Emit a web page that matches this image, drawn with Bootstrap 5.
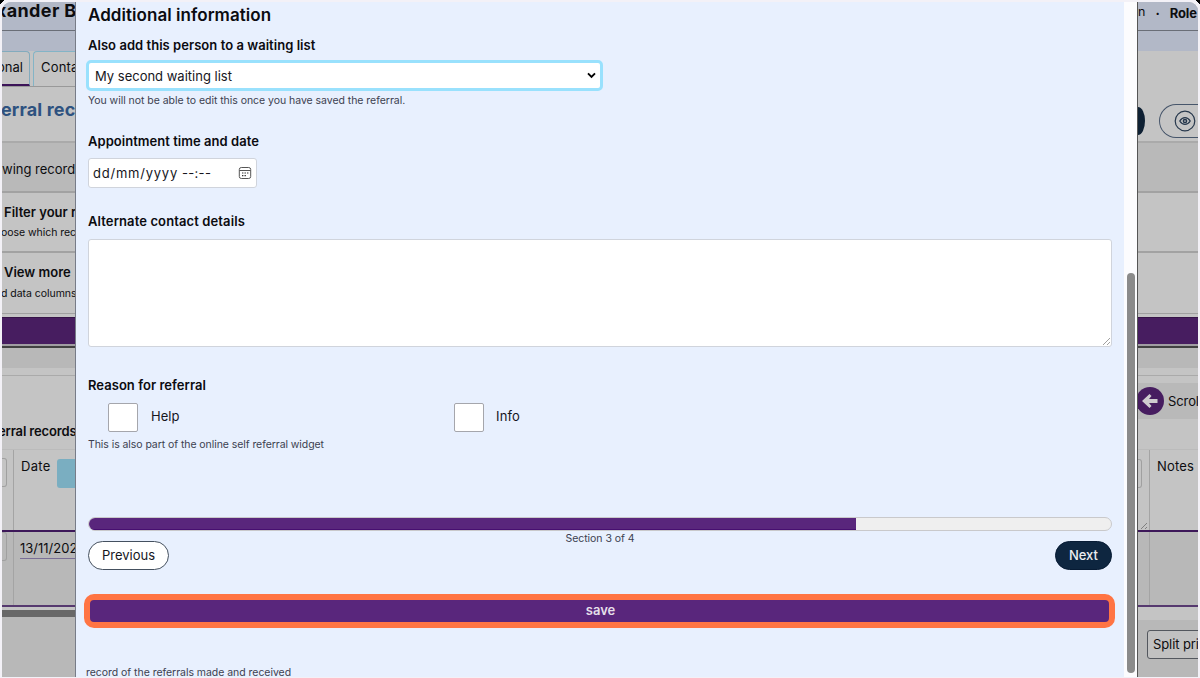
<!DOCTYPE html>
<html lang="en">
<head>
<meta charset="utf-8">
<meta name="viewport" content="width=device-width, initial-scale=1">
<title>Referral records</title>
<link rel="stylesheet" href="https://cdn.jsdelivr.net/npm/bootstrap@5.3.0/dist/css/bootstrap.min.css">
<style>
html,body{height:100%}
body{font-family:Inter,"Liberation Sans",sans-serif;font-size:13px;color:#16161d;background:#f3f1f7;overflow:hidden;line-height:20px}
.stage{height:678px;padding:2px 2px 1px;background:linear-gradient(135deg,#000 3px,transparent 3px),linear-gradient(225deg,#000 3px,transparent 3px),#f3f1f7}
.frame{height:675px;border-radius:9px 9px 0 0;overflow:hidden}
.t{display:inline-block;white-space:nowrap}
/* dimmed page on both sides of the dialog */
.side{background:#c4c4c4;overflow:hidden;white-space:nowrap}
.side-l{width:73px}.side-r{width:60px}
.side .t{color:#0d0d10}
.top{height:29px;background:#b2b8c7;border-bottom:1px solid #6a6e77}
.sub{height:20px;background:#b2b8c7}
.tabs{height:36px;border-bottom:1px solid #999}
.tab1{width:28px;flex:none;border:1px solid #83abbd;border-left:0;border-bottom:2px solid #3c1458;border-radius:0 4px 0 0;margin-right:3px}
.tab2{width:60px;flex:none;border:1px solid #83b4c6;border-right:0;border-bottom:0;border-radius:4px 0 0;padding-left:7px}
.head-row{height:54px}
.page-title{font-size:18px;line-height:46px;margin-left:-1px}
.side .page-title{color:#2e5280}
.viewing{height:52px;background:#b9b9b9;border-top:2px solid #aaa;border-bottom:2px solid #a2a2a2}
.panel1{height:60px;border-bottom:2px solid #a2a2a2}
.panel2{height:61px;border-bottom:1px solid #a0a0a0}
.side .panel-title{margin-left:2px;line-height:38px;font-weight:600}
.side .hint{margin-top:-6px}
.purple{height:29px;margin-top:3px;background:#471d60;border-top:1px solid #361448;border-bottom:2px solid #a09da2}
.shade{height:22px;background:#b8b8b8;border-top:2px solid #414141;margin-bottom:7px}
.gap1{height:74px;border-top:1px solid #aaa}
.thead0{height:83px;border-top:1px solid #bbb;border-bottom:2px solid #3d1859}
.trow0{height:75px;background:#b8b8b8;border-bottom:2px solid #56396f}
.c1{width:12px;border-right:1px solid #a4a4a4;flex:none}
.stub{width:5px;height:29px;border:1px solid #a0a0a0;border-left:0;border-radius:0 3px 3px 0}
.chip{width:40px;height:29px;background:#7aaec1;border-radius:3px;flex:none}
.date-link{border-bottom:1px solid #7a6e96;height:21px}
.hbar{height:7px;background:#686868;margin-top:3px}
.foot{height:60px;background:#b8b8b8}
.dark-cap{width:7px;height:28px;flex:none;background:#0e2033;border-radius:0 7px 7px 0/0 14px 14px 0}
.view-pill{width:60px;height:34px;flex:none;border:1px solid #47566b;border-right:0;border-radius:17px 0 0 17px;padding-left:14px}
.scroll-row{height:36px;background:#b9b9b9;margin-top:7px}
.split{height:29px;width:70px;border:1px solid #53575e;border-radius:3px;margin-left:9px;padding-left:5px;background:#c1c1c1}
/* dialog */
.sheet{width:1063px;background:#e8f0fe;border-left:1px solid #777c88;border-right:1px solid #555;flex:none}
.form-area{width:1048px;padding:0 12px}
.track{width:13px;background:#fcfcfe;padding:271px 2px 0 3px}
.thumb{height:400px;background:#8b8b8b;border-radius:4px}
.sheet-title{height:33px;padding-top:3px;font-size:17px;font-weight:600;letter-spacing:.05px;color:#0b0b10}
.lbl{font-weight:600;height:20px;color:#0b0b10;letter-spacing:.04px}
.hint{font-size:10.5px;height:16px;line-height:16px;color:#3c3f50;letter-spacing:-.04px}
.sel{width:517px;height:31px;border:3px solid #99e1fd;border-radius:5px;background:#fff;margin:5px 0 2px -2px;padding:0 4px 0 6px}
.field{border:1px solid #d0d4dc;border-radius:3px;background:#fff}
.date{width:169px;height:30px;padding:0 4px;margin-top:7px}
.area{height:108px;margin-top:8px;padding:0 1px 1px 0}
.checks{height:30px;margin:8px 0 4px 20px}
.box{width:30px;height:29px;background:#fff;border:1px solid #a5a6ac;border-radius:2px}
.check-cell{width:346px}
.bar{height:14px;border:1px solid #c9c9cb;border-radius:7px;background:#efefef;overflow:hidden;margin-top:64px}
.fill{height:12px;background:#59267c;border-bottom:1px solid #470f70}
.nav3{display:grid;grid-template-columns:1fr auto 1fr;height:39px}
.pill{display:block;height:29px;border-radius:15px;border:1px solid #44505f;background:#fff;line-height:20px;padding:0 13px 2px;color:#16161d}
.next{background:#0e2640;color:#eceef0;border-color:#071b34;font-weight:500}
.save{height:34px;width:1031px;margin:24px 0 0 -4px;border:6px solid #ff7443;border-radius:10px;background:#59267c;color:#e5dfe9;font-weight:600;line-height:20px;padding-left:2px}
</style>
</head>
<body>
<div class="stage"><div class="frame d-flex">
<div class="side side-l">
 <div class="top"><span class="t fw-bold" style="font-size:18px;line-height:17px;margin-left:-6px;letter-spacing:.35px">xander B</span></div>
 <div class="sub"></div>
 <div class="tabs d-flex"><div class="tab1"><span class="t" style="line-height:31px;margin-left:-5px">onal</span></div><div class="tab2"><span class="t" style="line-height:31px;letter-spacing:.2px">Conta</span></div></div>
 <div class="head-row"><span class="t fw-bold page-title" style="letter-spacing:.15px">erral rec</span></div>
 <div class="viewing"><span class="t" style="line-height:53px">wing record</span></div>
 <div class="panel1"><div class="t panel-title">Filter your r</div><div class="hint"><span class="t" style="margin-left:-1px">oose which rec</span></div></div>
 <div class="panel2"><div class="t panel-title">View more</div><div class="hint" style="margin-top:-5px"><span class="t" style="margin-left:-1px">d data columns</span></div></div>
 <div class="purple"></div><div class="shade"></div>
 <div class="gap1"><span class="t" style="line-height:111px;font-weight:600;margin-left:-4px;letter-spacing:-.15px">erral records</span></div>
 <div class="thead0 d-flex"><div class="c1 pt-2"><div class="stub"></div></div><span class="t" style="margin:6px 6px 0 7px;letter-spacing:.3px">Date</span><div class="chip" style="margin-top:9px"></div></div>
 <div class="trow0 d-flex"><div class="c1"><div class="stub"></div></div><span class="t date-link" style="margin:6px 0 0 6px">13/11/202</span></div>
 <div class="hbar"></div><div class="foot"></div>
</div>
<div class="sheet d-flex">
 <div class="form-area">
  <div class="sheet-title">Additional information</div>
  <div class="lbl">Also add this person to a waiting list</div>
  <div class="sel d-flex align-items-center justify-content-between"><span>My second waiting list</span><svg width="9" height="7" viewBox="0 0 9 7"><path d="M1 1.3 4.5 4.8 8 1.3" fill="none" stroke="#000" stroke-width="1.9"/></svg></div>
  <div class="hint" style="height:38px">You will not be able to edit this once you have saved the referral.</div>
  <div class="lbl">Appointment time and date</div>
  <div class="field date d-flex align-items-center"><span style="letter-spacing:.77px">dd/mm/yyyy</span><span style="letter-spacing:.3px;margin-left:4px">--:--</span><svg class="ms-auto" width="14" height="14" viewBox="0 0 14 14"><rect x="1.3" y="1.5" width="11.4" height="11" rx="2" fill="none" stroke="#555" stroke-width="1"/><path d="M1.5 4.5h11" stroke="#555"/><path d="M4 7h1.400M6.500 7h1.400M9 7h1.400M4 9.600h1.400M6.500 9.600h1.400" stroke="#333" stroke-width="1.200"/></svg></div>
  <div class="lbl" style="margin-top:23px;letter-spacing:.11px">Alternate contact details</div>
  <div class="field area d-flex align-items-end justify-content-end"><svg width="8" height="8" viewBox="0 0 8 8"><path d="M1 8 8 1M5 8 8 5" stroke="#888" stroke-width=".8"/></svg></div>
  <div class="lbl" style="margin-top:28px">Reason for referral</div>
  <div class="checks d-flex"><div class="check-cell d-flex"><div class="box"></div><span style="margin:3px 0 0 13px">Help</span></div><div class="d-flex"><div class="box"></div><span style="margin:3px 0 0 12px;letter-spacing:.15px">Info</span></div></div>
  <div class="hint" style="letter-spacing:-.07px">This is also part of the online self referral widget</div>
  <div class="bar"><div class="fill" style="width:75%"></div></div>
  <div class="nav3"><div class="align-self-end"><button class="pill">Previous</button></div><span class="hint">Section 3 of 4</span><div class="align-self-end"><button class="pill next ms-auto">Next</button></div></div>
  <div class="save text-center">save</div>
  <div class="hint" style="margin:37px 0 0 -2px;height:10px">record of the referrals made and received</div>
 </div>
 <div class="track"><div class="thumb"></div></div>
</div>
<div class="side side-r">
 <div class="top d-flex"><span class="t" style="font-size:12.5px">n</span><span class="t fw-bold" style="margin:1px 0 0 10px">·</span><span class="t" style="margin:1px 0 0 10px;font-weight:700;letter-spacing:-.16px">Role</span></div>
 <div class="sub"></div>
 <div style="height:90px;padding-top:53px"><div class="d-flex align-items-center"><div class="dark-cap"></div><div class="view-pill d-flex align-items-center" style="margin-left:14px"><svg width="22" height="22" viewBox="0 0 22 22" fill="none" stroke="#26374c"><circle cx="11" cy="11" r="9.8" stroke-width="1.2"/><path d="M5.8 11c2.8-4.6 7.6-4.6 10.4 0-2.8 4.6-7.6 4.6-10.4 0z" stroke-width="1.3"/><circle cx="11" cy="11" r="1.6" stroke-width="1.5"/></svg></div></div></div>
 <div class="viewing"></div><div class="panel1"></div><div class="panel2"></div>
 <div class="purple"></div><div class="shade"></div>
 <div class="gap1 pt-0"><div class="scroll-row d-flex align-items-center"><svg class="flex-shrink-0" width="26" height="28" viewBox="0 0 26 28"><circle cx="12" cy="14" r="14" fill="#471d60"/><path d="M4 14l7.500-7 2 2-2.500 3h8.500v4H11l2.500 3-2 2z" fill="#cfcccf"/></svg><span class="t" style="margin-left:4px;letter-spacing:-.1px">Scrol</span></div></div>
 <div class="thead0 d-flex"><div class="c1 d-flex flex-column justify-content-between" style="padding-top:9px"><div class="stub" style="width:4px"></div><svg width="10" height="8" viewBox="0 0 10 8"><path d="M3 7 9 1M7 7l2-2" stroke="#777" stroke-width=".9"/></svg></div><span class="t" style="margin:6px 0 0 7px;letter-spacing:.17px">Notes</span></div>
 <div class="trow0 d-flex"><div class="c1"></div></div>
 <div style="height:13px"></div>
 <div class="foot pt-2"><div class="split" style="margin-top:2px"><span class="t" style="line-height:26px;letter-spacing:-.1px">Split pri</span></div></div>
</div>
</div></div>
<script src="https://cdn.jsdelivr.net/npm/bootstrap@5.3.0/dist/js/bootstrap.bundle.min.js"></script>
</body>
</html>
